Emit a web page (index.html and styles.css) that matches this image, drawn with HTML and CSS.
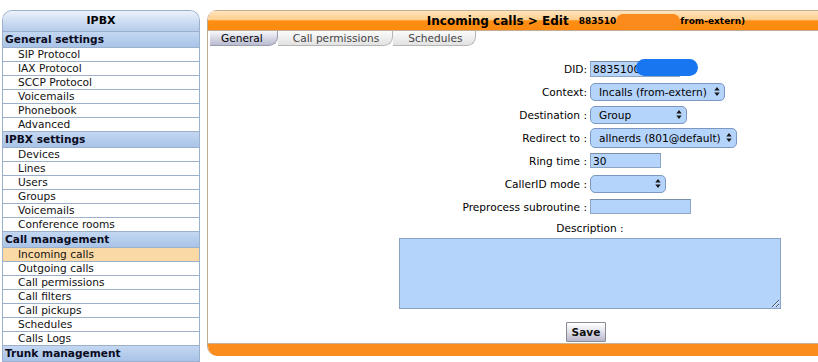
FILE: index.html
```html
<!DOCTYPE html>
<html lang="en">
<head>
  <meta charset="UTF-8" />
  <title>IPBX - Incoming calls</title>
  <link rel="stylesheet" href="styles.css">
</head>
<body>

  <div class="page">
    <aside class="menu">
      <div class="menu-title">IPBX</div>

      <div class="menu-section">General settings</div>
      <a class="menu-item" href="#">SIP Protocol</a>
      <a class="menu-item" href="#">IAX Protocol</a>
      <a class="menu-item" href="#">SCCP Protocol</a>
      <a class="menu-item" href="#">Voicemails</a>
      <a class="menu-item" href="#">Phonebook</a>
      <a class="menu-item" href="#">Advanced</a>

      <div class="menu-section">IPBX settings</div>
      <a class="menu-item" href="#">Devices</a>
      <a class="menu-item" href="#">Lines</a>
      <a class="menu-item" href="#">Users</a>
      <a class="menu-item" href="#">Groups</a>
      <a class="menu-item" href="#">Voicemails</a>
      <a class="menu-item" href="#">Conference rooms</a>

      <div class="menu-section">Call management</div>
      <a class="menu-item active" href="#">Incoming calls</a>
      <a class="menu-item" href="#">Outgoing calls</a>
      <a class="menu-item" href="#">Call permissions</a>
      <a class="menu-item" href="#">Call filters</a>
      <a class="menu-item" href="#">Call pickups</a>
      <a class="menu-item" href="#">Schedules</a>
      <a class="menu-item" href="#">Calls Logs</a>

      <div class="menu-section">Trunk management</div>
    </aside>

    <main class="panel">
      <div class="panel-head">
        <span class="title">Incoming calls &gt; Edit</span>
        <span class="subtitle">883510<span class="blot"></span>from-extern)</span>
      </div>

      <div class="tabs">
        <a class="tab active" href="#">General</a>
        <a class="tab" href="#">Call permissions</a>
        <a class="tab" href="#">Schedules</a>
      </div>

      <form class="form">
        <div class="row">
          <label class="label">DID:</label>
          <div class="field">
            <span class="masked">
              <input class="text did" type="text" value="8835100">
              <span class="mask"></span>
            </span>
          </div>
        </div>

        <div class="row">
          <label class="label">Context:</label>
          <div class="field">
            <span class="select w-context">Incalls (from-extern)<svg class="arrows" viewBox="0 0 6 10"><path d="M0 4 L3 0 L6 4 Z M0 6 L3 10 L6 6 Z"/></svg></span>
          </div>
        </div>

        <div class="row">
          <label class="label">Destination :</label>
          <div class="field">
            <span class="select w-dest">Group<svg class="arrows" viewBox="0 0 6 10"><path d="M0 4 L3 0 L6 4 Z M0 6 L3 10 L6 6 Z"/></svg></span>
          </div>
        </div>

        <div class="row">
          <label class="label">Redirect to :</label>
          <div class="field">
            <span class="select w-redirect">allnerds (801@default)<svg class="arrows" viewBox="0 0 6 10"><path d="M0 4 L3 0 L6 4 Z M0 6 L3 10 L6 6 Z"/></svg></span>
          </div>
        </div>

        <div class="row">
          <label class="label">Ring time :</label>
          <div class="field"><input class="text w-ring" type="text" value="30"></div>
        </div>

        <div class="row">
          <label class="label">CallerID mode :</label>
          <div class="field">
            <span class="select w-caller"><svg class="arrows" viewBox="0 0 6 10"><path d="M0 4 L3 0 L6 4 Z M0 6 L3 10 L6 6 Z"/></svg></span>
          </div>
        </div>

        <div class="row">
          <label class="label">Preprocess subroutine :</label>
          <div class="field"><input class="text w-sub" type="text" value=""></div>
        </div>

        <div class="desc-label">Description :</div>
        <textarea class="desc"></textarea>

        <div class="actions">
          <button class="save" type="button">Save</button>
        </div>
      </form>

      <div class="panel-foot"></div>
    </main>
  </div>

</body>
</html>
```

FILE: styles.css
```css
html {
  overflow: hidden;
}

body {
  margin: 0;
  padding: 10px 0 0 2px;
  font-family: 'DejaVu Sans', Verdana, sans-serif;
  font-size: 10.6px;
  color: #000;
  background: #fff;
}

.page {
  display: flex;
  align-items: flex-start;
  gap: 7px;
}

/* menu de gauche */
.menu {
  width: 196px;
  flex-shrink: 0;
  display: flex;
  flex-direction: column;
  border: 1px solid #9cb0cc;
  border-bottom: none;
  border-radius: 10px 10px 0 0;
  overflow: hidden;
}

.menu-title {
  height: 20px;
  line-height: 20px;
  text-align: center;
  font-weight: bold;
  font-size: 11px;
  background: linear-gradient(#edf2fa, #c9daf1 60%, #b5cbeb);
  border-bottom: 1px solid #9cb0cc;
}

.menu-section {
  height: 15px;
  line-height: 15px;
  padding-left: 2px;
  font-weight: bold;
  font-size: 10.6px;
  color: #0b0b1e;
  background: linear-gradient(#c3d7f1, #a9c4e8);
  border-bottom: 1px solid #9cb0cc;
}

.menu-item {
  height: 13px;
  line-height: 13px;
  padding-left: 15px;
  color: #111;
  text-decoration: none;
  background: #fff;
  border-bottom: 1px solid #9cb0cc;
}

.menu-item.active {
  background: #fbd9a4;
}

/* panneau principal */
.panel {
  width: 764px;
  height: 346px;
  flex-shrink: 0;
  display: flex;
  flex-direction: column;
  border-left: 1px solid #c2ad93;
  border-radius: 10px 0 0 10px;
  overflow: hidden;
}

.panel-head {
  height: 19px;
  display: flex;
  align-items: center;
  justify-content: center;
  gap: 10px;
  padding-right: 8px;
  border-top: 1px solid #c2ad93;
  border-bottom: 1px solid #c2ad93;
  background: linear-gradient(#ffe4bd 0, #ffcf8e 45%, #ff8e14 52%, #fd8a0e 100%);
}

.title {
  font-size: 12px;
  font-weight: bold;
}

.subtitle {
  font-size: 9px;
  font-weight: bold;
  display: flex;
  align-items: center;
}

.blot {
  display: inline-block;
  width: 64px;
  height: 15px;
  border-radius: 7px;
  background: #fa8b1c;
  margin-top: 1px;
}

.tabs {
  display: flex;
  height: 15px;
  padding-left: 2px;
}

.tab {
  height: 14px;
  line-height: 14px;
  padding: 0 13px 0 15px;
  font-size: 10.6px;
  color: #444;
  text-decoration: none;
  background: linear-gradient(#fbfbfb, #e2e2e2);
  border: 1px solid #b5b5b5;
  border-top: none;
  border-left: none;
  border-radius: 0 0 9px 0;
}

.tab.active {
  padding: 0 14px 0 11px;
  color: #000;
  background: linear-gradient(#f7f7fb, #b9bbd0);
  border-color: #9a9cb0;
}

/* formulaire */
.form {
  flex: 1;
  padding-top: 11px;
  display: flex;
  flex-direction: column;
}

.row {
  display: grid;
  grid-template-columns: 382px 382px;
  align-items: center;
  min-height: 23px;
}

.label {
  text-align: right;
  padding-right: 3px;
}

.field {
  display: flex;
  align-items: center;
}

.text {
  height: 15px;
  box-sizing: border-box;
  padding: 0 2px;
  font-family: inherit;
  font-size: 10.6px;
  background: #b5d4fb;
  border: 1px solid #8ea6c6;
  border-top-color: #7b8ea8;
  outline: none;
}

.masked {
  position: relative;
  display: inline-block;
}

.did {
  width: 90px;
  height: 16px;
}

.mask {
  position: absolute;
  left: 46px;
  top: -2px;
  width: 62px;
  height: 17px;
  border-radius: 9px;
  background: #1877f0;
}

.w-ring {
  width: 71px;
}

.w-sub {
  width: 101px;
}

.select {
  height: 18px;
  box-sizing: border-box;
  display: flex;
  align-items: center;
  padding: 0 4px 0 8px;
  background: #b5d4fb;
  border: 1px solid #7c98c2;
  border-radius: 5px;
  white-space: nowrap;
}

.arrows {
  width: 6px;
  height: 9px;
  margin-left: auto;
  fill: #1a1a1a;
}

.w-context {
  width: 135px;
}

.w-dest {
  width: 97px;
}

.w-redirect {
  width: 147px;
  height: 20px;
}

.w-caller {
  width: 76px;
}

.desc-label {
  text-align: center;
  line-height: 19px;
  margin-top: 1px;
}

.desc {
  display: block;
  width: 382px;
  height: 71px;
  box-sizing: border-box;
  margin: 0 auto;
  background: #b5d4fb;
  border: 1px solid #8aa3c4;
  font-family: inherit;
  resize: both;
}

.actions {
  text-align: center;
  margin-top: 13px;
}

.save {
  width: 40px;
  height: 20px;
  padding: 0;
  margin-left: -8px;
  font-family: inherit;
  font-size: 10.6px;
  font-weight: bold;
  color: #111;
  background: linear-gradient(#ffffff, #e7e7ef 40%, #b8b8cb);
  border: 1px solid #8b8b96;
  border-radius: 1px;
}

.panel-foot {
  height: 12px;
  border-top: 1px solid #c9b48f;
  background: #fb8d1c;
}
```
